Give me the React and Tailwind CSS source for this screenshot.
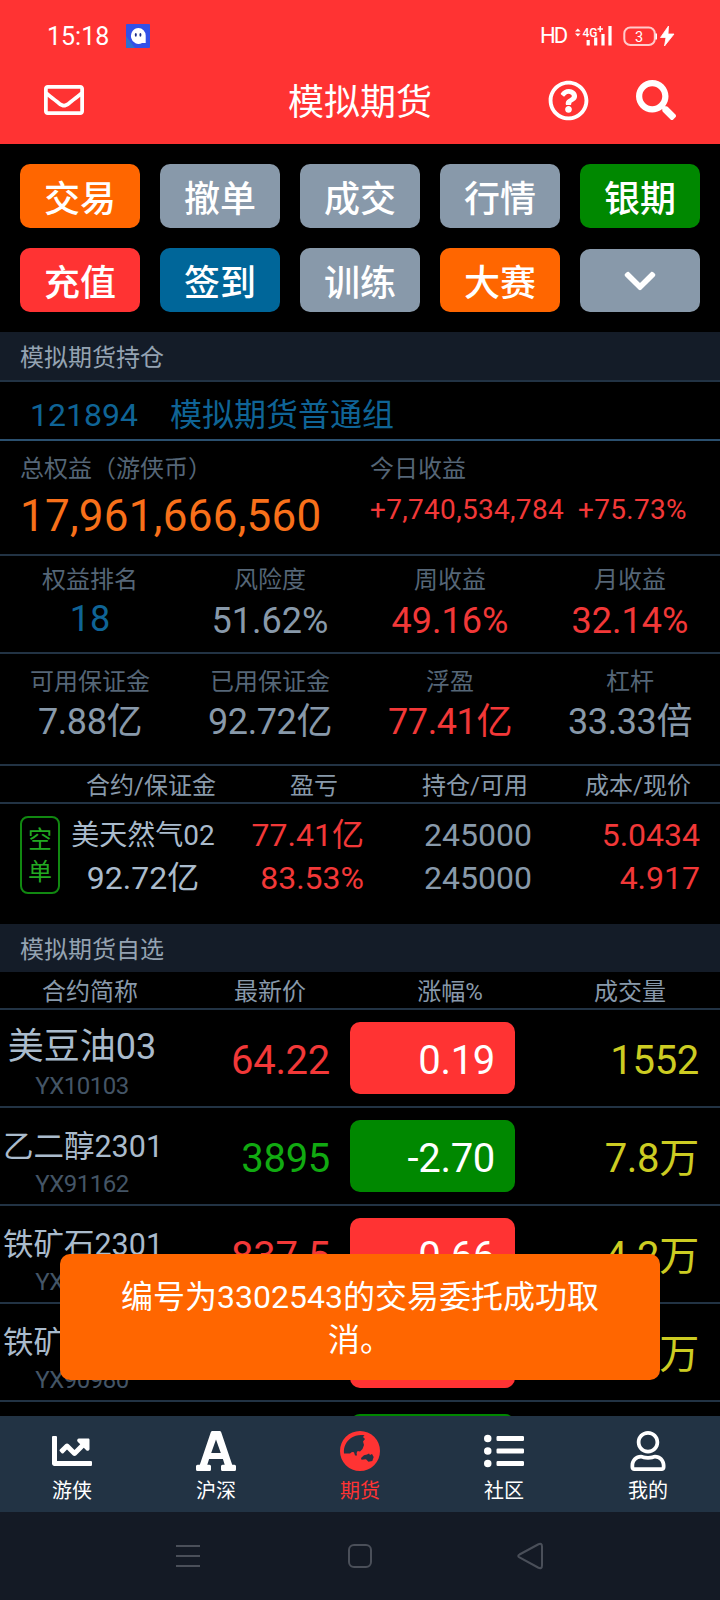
import { FaListUl, FaRegEnvelope, FaRegQuestionCircle, FaRegUser, FaSearch, FaChartLine, FaChevronDown } from 'react-icons/fa';

const actions = [
  { label: '交易', color: 'bg-[#ff6600]' },
  { label: '撤单', color: 'bg-[#8899aa]' },
  { label: '成交', color: 'bg-[#8899aa]' },
  { label: '行情', color: 'bg-[#8899aa]' },
  { label: '银期', color: 'bg-[#008800]' },
  { label: '充值', color: 'bg-[#ff3333]' },
  { label: '签到', color: 'bg-[#006699]' },
  { label: '训练', color: 'bg-[#8899aa]' },
  { label: '大赛', color: 'bg-[#ff6600]' },
];

const rankStats = [
  { label: '权益排名', value: '18', color: 'text-[#0f6496] leading-[47px]' },
  { label: '风险度', value: '51.62%', color: 'text-[#8899aa] leading-[50px]' },
  { label: '周收益', value: '49.16%', color: 'text-[#f23838] leading-[50px]' },
  { label: '月收益', value: '32.14%', color: 'text-[#f23838] leading-[50px]' },
];

const marginStats = [
  { label: '可用保证金', value: '7.88亿', color: 'text-[#8899aa] leading-[48px] tracking-[-0.4px]' },
  { label: '已用保证金', value: '92.72亿', color: 'text-[#8899aa] leading-[48px] tracking-[-0.4px]' },
  { label: '浮盈', value: '77.41亿', color: 'text-[#f23838] leading-[48px] tracking-[-0.4px]' },
  { label: '杠杆', value: '33.33倍', color: 'text-[#8899aa] leading-[48px] tracking-[-0.4px]' },
];

const quotes = [
  { name: '美豆油03', size: 'text-[36px] pt-0.5', code: 'YX10103', price: '64.22', change: '0.19', volume: '1552', up: true },
  { name: '乙二醇2301', size: 'text-[30.5px] pt-1.5 pl-0.5', code: 'YX91162', price: '3895', change: '-2.70', volume: '7.8万', up: false },
  { name: '铁矿石2301', size: 'text-[30.5px] pt-1.5 pl-0.5', code: 'YX91012', price: '837.5', change: '0.66', volume: '4.2万', up: true },
  { name: '铁矿石2305', size: 'text-[30.5px] pt-1.5 pl-0.5', code: 'YX90980', price: '819.0', change: '0.43', volume: '1.5万', up: true },
  { name: '', size: 'text-[30.5px]', code: '', price: '', change: '', volume: '', up: false },
];

function LetterIcon({ size }) {
  return (
    <svg width={size} height={size} viewBox="0 0 40 40" fill="currentColor" fillRule="evenodd">
      <path d="M14.800 1.200Q15.200 0 16.500 0h7q1.300 0 1.700 1.200L36.200 33.700h2.300q1.500 0 1.500 1.500v3.300q0 1.500-1.500 1.500h-12q-1.500 0-1.500-1.500v-3.300q0-1.500 1.500-1.500h2.200L26.900 28H13.100l-1.800 5.700h2.200q1.500 0 1.500 1.500v3.300q0 1.500-1.500 1.500h-12Q0 40 0 38.500v-3.300q0-1.500 1.500-1.500h2.300zM20 8.500 15.200 22h9.600z" />
    </svg>
  );
}

function GlobeIcon({ size }) {
  return (
    <svg width={size} height={size} viewBox="0 0 40 40" fill="currentColor" fillRule="evenodd">
      <path d="M20 0a20 20 0 1 1 0 40a20 20 0 0 1 0-40zM4 22.500h6l2-1.500 2 .3 1 3.200h2l-.4-2.500 1-2 2.400.6 2.500-2.600L24 14l-1-3.500L25 8l-2-2 1.500-1.700C20 3.400 15 4.200 11 7 6 10.500 3.300 16 4 22.500zM21 27l3-2.800 3-.7 2-1 1 1.500 2-1 1.700 3-1.400 4-3.800.7L26 28.200l-4.500.6z" />
    </svg>
  );
}

const tabs = [
  { label: '游侠', Icon: FaChartLine },
  { label: '沪深', Icon: LetterIcon },
  { label: '期货', Icon: GlobeIcon, active: true },
  { label: '社区', Icon: FaListUl },
  { label: '我的', Icon: FaRegUser },
];

function StatusBar() {
  return (
    <div className="flex h-[72px] items-center justify-between pl-[47px] pr-[44px] text-white">
      <div className="flex items-center">
        <span className="w-[79px] text-[25px] leading-none">15:18</span>
        <svg width="24" height="24" viewBox="0 0 24 24">
          <rect width="24" height="24" rx="1" fill="#3350e8" />
          <path d="M0 12v11q0 1 1 1h8z" fill="#2f6fd0" />
          <path d="M12.500 4a7.500 8 0 1 0 3.600 15h3.600v-7.400A7.400 7.800 0 0 0 12.500 4z" fill="#fff" />
          <ellipse cx="9.800" cy="10.800" rx="1" ry="1.900" fill="#1c2c88" />
          <ellipse cx="14.400" cy="10.800" rx="1" ry="1.900" fill="#1c2c88" />
        </svg>
      </div>
      <div className="flex items-center">
        <span className="w-[34px] text-[22px] leading-none tracking-[-2px]">HD</span>
        <svg width="40" height="24" viewBox="0 0 40 24">
          <path d="M1 7.500 3.800 4.500 6.600 7.500zM1 9.500 3.800 12.500 6.600 9.500z" fill="#fff" />
          <text x="8.500" y="12.500" fontSize="13" fontWeight="500" textLength="15" lengthAdjust="spacingAndGlyphs" fontFamily="Roboto" fill="#fff">4G</text>
          <path d="M26.200 2v6M23.500 5h5.500" stroke="#fff" strokeWidth="1.500" />
          <path d="M14.200 21.500v-5.500M21.700 21.500v-8M29 21.500V10M36 21.500V2" stroke="#fff" strokeWidth="3.200" />
        </svg>
        <svg className="ml-2" width="54" height="24" viewBox="0 0 54 24">
          <rect x="2.300" y="3.500" width="30.500" height="17.500" rx="6" fill="none" stroke="#fff" strokeOpacity=".75" strokeWidth="2" />
          <path d="M34.200 9.500v6" stroke="#fff" strokeWidth="1.600" />
          <text x="17.200" y="17.500" fontSize="14.500" textAnchor="middle" fontFamily="Roboto" fill="#fff">3</text>
          <path d="M46.500 2 38.500 13.500h5.500L42.500 22 52 10h-6z" fill="#fff" stroke="#fff" strokeWidth=".8" />
        </svg>
      </div>
    </div>
  );
}

function Header() {
  return (
    <header className="h-36 bg-[#ff3333] text-white">
      <StatusBar />
      <div className="grid h-14 grid-cols-3 items-center pl-11 pr-11">
        <FaRegEnvelope size={40} />
        <h1 className="pt-1.5 text-center text-[36px] leading-none">模拟期货</h1>
        <div className="flex justify-end gap-[47px]">
          <FaRegQuestionCircle size={41} />
          <FaSearch size={40} />
        </div>
      </div>
    </header>
  );
}

function SectionTitle({ children }) {
  return <h2 className="flex h-12 shrink-0 items-center bg-[#141c28] px-5 pt-[3px] text-[24px] leading-none text-[#94a3b2]">{children}</h2>;
}

function Stats({ items, className }) {
  return (
    <div className={`grid grid-cols-4 border-b-2 border-[#223344] text-center ${className}`}>
      {items.map((item) => (
        <div key={item.label}>
          <div className="text-[24px] leading-8 text-[#556677]">{item.label}</div>
          <div className={`text-[36px] ${item.color}`}>{item.value}</div>
        </div>
      ))}
    </div>
  );
}

function QuoteRow({ quote }) {
  return (
    <div className="flex h-[98px] shrink-0 items-center border-b-2 border-[#223344]">
      <div className="flex h-full w-[164px] flex-col items-center whitespace-nowrap pt-3">
        <span className={`flex h-12 items-center leading-none text-[#aabbcc] ${quote.size}`}>{quote.name}</span>
        <span className="text-[24px] leading-8 tracking-[-0.5px] text-[#445566]">{quote.code}</span>
      </div>
      <div className={`w-[166px] pt-1.5 text-right text-[40px] leading-none tracking-[-0.3px] ${quote.up ? 'text-[#f23838]' : 'text-[#11aa11]'}`}>{quote.price}</div>
      <div className={`ml-5 flex h-[72px] w-[165px] items-center justify-end rounded-[10px] pr-5 pt-1.5 text-[40px] leading-none tracking-[-0.3px] text-white ${quote.up ? 'bg-[#ff3333]' : 'bg-[#008800]'}`}>
        {quote.change}
      </div>
      <div className="flex-1 pr-[21px] pt-1.5 text-right text-[40px] leading-none tracking-[-0.3px] text-[#cccc22]">{quote.volume}</div>
    </div>
  );
}

export default function App() {
  return (
    <div className="relative flex h-[1600px] w-[720px] flex-col overflow-hidden bg-black font-['Roboto','Noto_Sans_CJK_SC',sans-serif]">
      <Header />

      <div className="grid h-[188px] shrink-0 grid-cols-5 content-start gap-5 p-5">
        {actions.map((action) => (
          <button key={action.label} className={`h-16 rounded-[10px] pt-[7px] text-[36px] font-medium leading-none text-white ${action.color}`}>
            {action.label}
          </button>
        ))}
        <button className="mt-px flex h-[63px] items-center justify-center rounded-[10px] bg-[#8899aa] text-white">
          <FaChevronDown size={36} />
        </button>
      </div>

      <SectionTitle>模拟期货持仓</SectionTitle>
      <div className="flex h-[61px] shrink-0 items-center gap-8 border-b-2 border-t-2 border-b-[#2b506f] border-t-[#223344] pl-[30px] pt-2 text-[32px] leading-none text-[#0f6496]">
        <span>121894</span>
        <span>模拟期货普通组</span>
      </div>

      <div className="flex h-[115px] shrink-0 border-b-2 border-[#223344] pl-5 pt-3">
        <div className="w-[350px]">
          <div className="text-[24px] leading-8 text-[#556677]">总权益（游侠币）</div>
          <div className="text-[44px] leading-[63px] tracking-[0.25px] text-[#f8701a]">17,961,666,560</div>
        </div>
        <div>
          <div className="text-[24px] leading-8 text-[#556677]">今日收益</div>
          <div className="flex gap-[14px] text-[28px] leading-[50px] tracking-[0.3px] text-[#f23838]">
            <span>+7,740,534,784</span>
            <span>+75.73%</span>
          </div>
        </div>
      </div>

      <Stats items={rankStats} className="h-[98px] shrink-0 pt-2" />
      <Stats items={marginStats} className="h-[112px] shrink-0 pt-3" />

      <div className="flex h-[38px] shrink-0 items-center border-b-2 border-[#223344] pl-[72px] pt-[3px] text-center text-[24px] leading-none text-[#8899aa]">
        <span className="w-[158px]">合约/保证金</span>
        <span className="w-[168px]">盈亏</span>
        <span className="w-[154px]">持仓/可用</span>
        <span className="w-[168px] pl-1">成本/现价</span>
      </div>
      <div className="flex h-[120px] shrink-0 items-start px-5 pt-2.5 text-[32px] leading-[43px]">
        <div className="mt-0.5 flex h-[78px] w-10 flex-col items-center justify-center rounded-lg border-2 border-[#118811] pt-0.5 text-[24px] leading-8 text-[#22aa22]">
          <span>空</span>
          <span>单</span>
        </div>
        <div className="ml-2.5 w-[146px] whitespace-nowrap text-center text-[#aabbcc]">
          <div className="text-[28px]">美天然气02</div>
          <div>92.72亿</div>
        </div>
        <div className="w-[148px] text-right text-[#f23838]">
          <div>77.41亿</div>
          <div>83.53%</div>
        </div>
        <div className="w-[168px] pl-[60px] text-[#8899aa]">
          <div>245000</div>
          <div>245000</div>
        </div>
        <div className="flex-1 text-right text-[#f23838]">
          <div>5.0434</div>
          <div>4.917</div>
        </div>
      </div>

      <SectionTitle>模拟期货自选</SectionTitle>
      <div className="grid h-[38px] shrink-0 grid-cols-4 items-center border-b-2 border-[#223344] pt-[3px] text-center text-[24px] leading-none text-[#8899aa]">
        <span>合约简称</span>
        <span>最新价</span>
        <span>涨幅%</span>
        <span>成交量</span>
      </div>
      <div className="flex h-[406px] shrink-0 flex-col overflow-hidden">
        {quotes.map((quote, i) => (
          <QuoteRow key={i} quote={quote} />
        ))}
      </div>

      <nav className="grid h-24 shrink-0 grid-cols-5 bg-[#223344] pt-[15px] text-white">
        {tabs.map(({ label, Icon, active }) => (
          <div key={label} className={`flex flex-col items-center ${active ? 'text-[#ff3333]' : ''}`}>
            <Icon size={40} />
            <span className="mt-[5px] text-[20px] leading-[30px]">{label}</span>
          </div>
        ))}
      </nav>

      <div className="flex h-[88px] shrink-0 items-center bg-[#141a25] pl-[175px]">
        <svg width="370" height="30" viewBox="0 0 370 30" fill="none" stroke="#4a4f59" strokeWidth="2">
          <path d="M1 5h24M1 15h24M1 25h24" />
          <rect x="174" y="4" width="22" height="22" rx="5" />
          <path d="M344.500 13.500 363 3.500q4-2 4 2v19q0 4-4 2l-18.500-10q-2.500-1.500 0-3z" />
        </svg>
      </div>

      {/* Toast */}
      <div className="absolute left-[60px] top-[1254px] flex h-[126px] w-[600px] items-center justify-center rounded-[10px] bg-[#ff6600] px-[60px] pt-1 text-center text-[32px] leading-[43px] text-white">
        编号为3302543的交易委托成功取消。
      </div>
    </div>
  );
}
